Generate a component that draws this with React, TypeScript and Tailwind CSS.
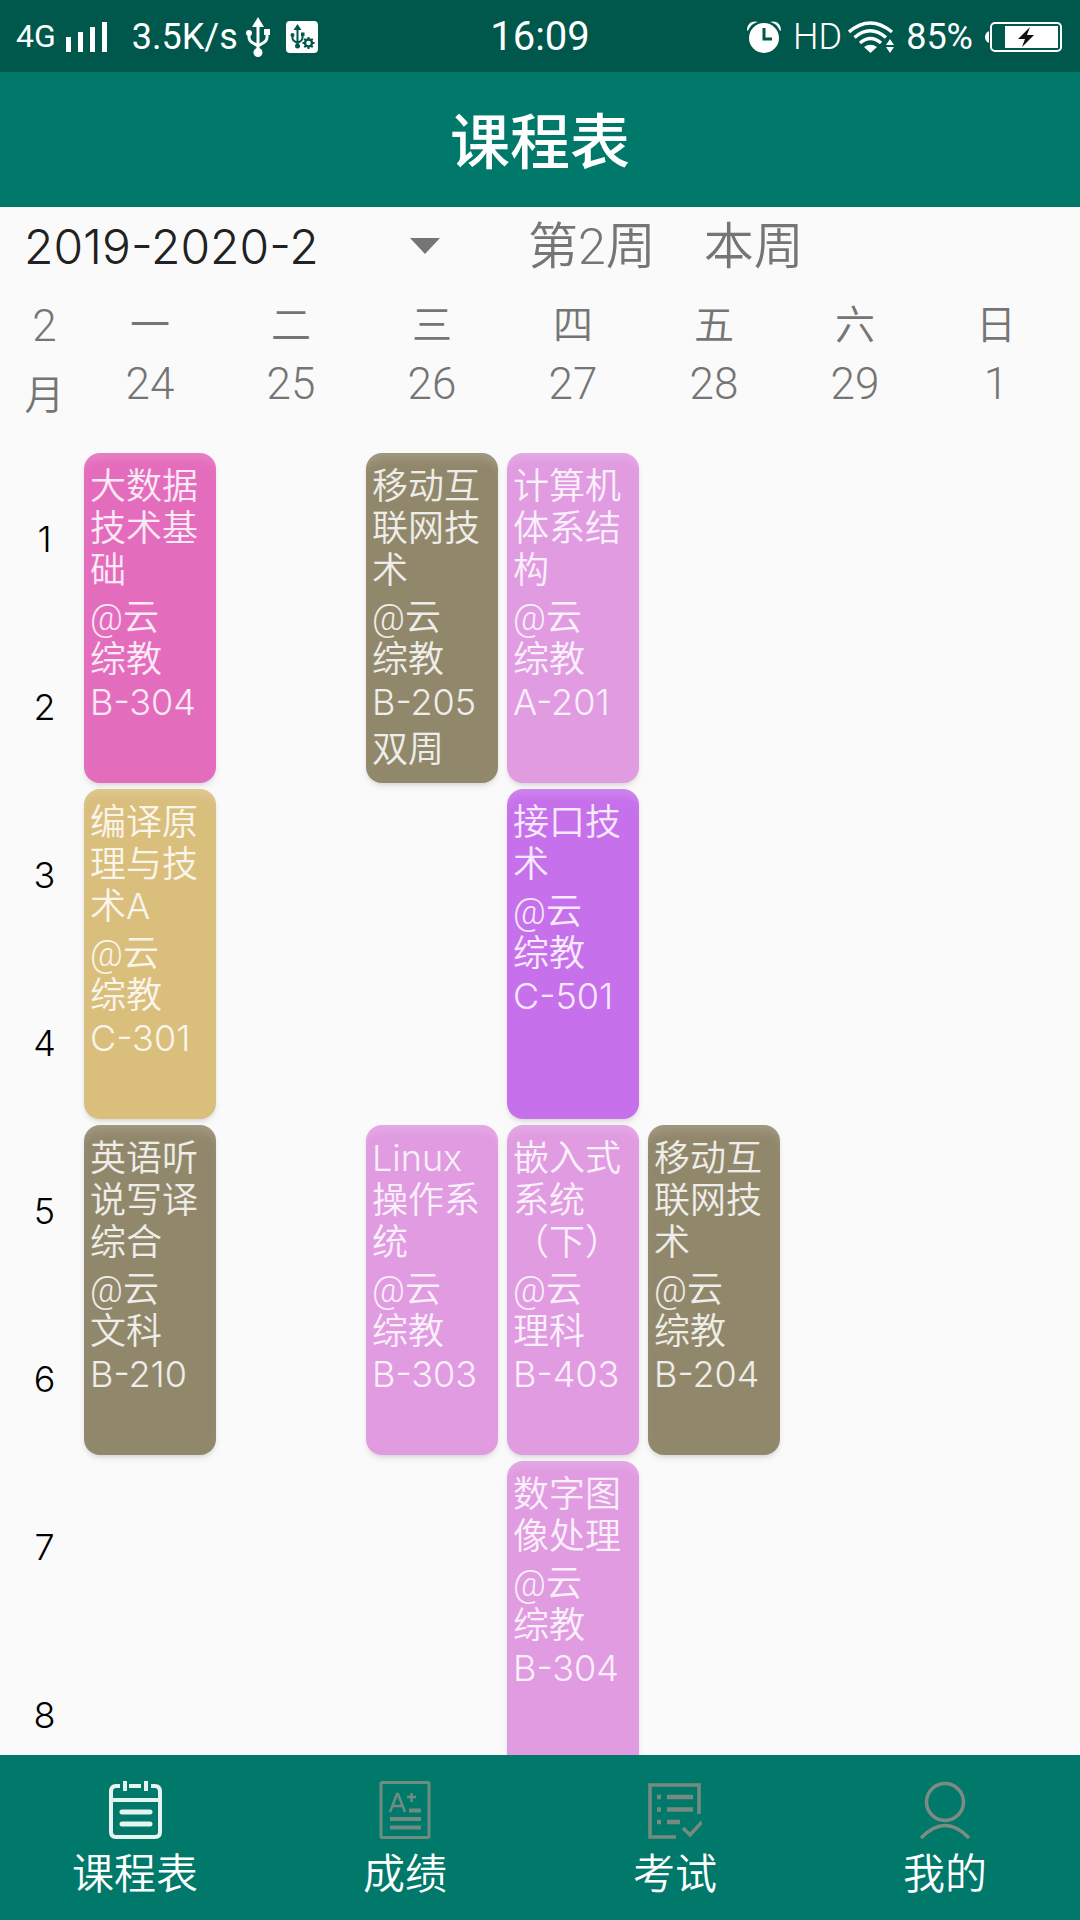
import { useState } from "react";

type Course = {
  day: number;
  start: number;
  title: string;
  campus: string;
  building: string;
  room: string;
  note?: string;
  tone: string;
};

const PINK = "bg-[#e46cbc]";
const OLIVE = "bg-[#91886c]";
const ORCHID = "bg-[#e09be1]";
const SAND = "bg-[#d9be7c]";
const VIOLET = "bg-[#c670eb]";

const courses: Course[] = [
  { day: 1, start: 1, title: "大数据技术基础", campus: "@云", building: "综教", room: "B-304", tone: PINK },
  { day: 3, start: 1, title: "移动互联网技术", campus: "@云", building: "综教", room: "B-205", note: "双周", tone: OLIVE },
  { day: 4, start: 1, title: "计算机体系结构", campus: "@云", building: "综教", room: "A-201", tone: ORCHID },
  { day: 1, start: 3, title: "编译原理与技术A", campus: "@云", building: "综教", room: "C-301", tone: SAND },
  { day: 4, start: 3, title: "接口技术", campus: "@云", building: "综教", room: "C-501", tone: VIOLET },
  { day: 1, start: 5, title: "英语听说写译综合", campus: "@云", building: "文科", room: "B-210", tone: OLIVE },
  { day: 3, start: 5, title: "Linux操作系统", campus: "@云", building: "综教", room: "B-303", tone: ORCHID },
  { day: 4, start: 5, title: "嵌入式系统（下）", campus: "@云", building: "理科", room: "B-403", tone: ORCHID },
  { day: 5, start: 5, title: "移动互联网技术", campus: "@云", building: "综教", room: "B-204", tone: OLIVE },
  { day: 4, start: 7, title: "数字图像处理", campus: "@云", building: "综教", room: "B-304", tone: ORCHID },
];

const days = [
  ["一", "24"],
  ["二", "25"],
  ["三", "26"],
  ["四", "27"],
  ["五", "28"],
  ["六", "29"],
  ["日", "1"],
];

const columnStart = ["", "col-start-2", "col-start-3", "col-start-4", "col-start-5", "col-start-6", "col-start-7", "col-start-8"];
const rowStart = ["", "row-start-1", "row-start-2", "row-start-3", "row-start-4", "row-start-5", "row-start-6", "row-start-7", "row-start-8"];

const gridColumns = "grid grid-cols-[61px_repeat(7,minmax(0,1fr))] gap-x-[9px] pl-[14px] pr-[18px]";

function SignalIcon() {
  return (
    <svg className="h-[30px] w-[42px]" viewBox="0 0 42 30" fill="currentColor" aria-hidden="true">
      <path d="M0 15h5v15H0zM12 10h5v20h-5zM24 5h5v25h-5zM36 0h5v30h-5z" />
    </svg>
  );
}

function UsbIcon() {
  return (
    <svg className="h-10 w-6" viewBox="0 0 24 40" aria-hidden="true">
      <path d="M12 0l6 10H6z" fill="#fff" />
      <path d="M12 8v28M3 16v4q0 4 4 6l5 3M21 15v5q0 4-4 6l-5 3" fill="none" stroke="#fff" strokeWidth="3" />
      <circle cx="12" cy="35.500" r="4.500" fill="#fff" />
      <circle cx="3" cy="16" r="3" fill="#fff" />
      <path d="M18 12h6v6h-6z" fill="#fff" />
    </svg>
  );
}

function UsbSettingsIcon() {
  return (
    <svg className="size-8" viewBox="0 0 32 32" aria-hidden="true">
      <rect width="32" height="32" rx="4" fill="#fff" />
      <g fill="none" stroke="#00574b">
        <path d="M11.500 6v19M6.500 14v3.500q0 2 5 4.500M16.500 13v4q0 2.500-5 5" strokeWidth="2" />
        <circle cx="22.500" cy="22" r="3.500" strokeWidth="2.400" />
        <path d="M22.500 16v2.500M22.500 25.500V28M16.500 22H19M26 22h2.500M18.300 17.800l1.700 1.700M25 24.500l1.700 1.700M18.300 26.200l1.700-1.700M25 19.500l1.700-1.700" strokeWidth="2" />
      </g>
      <path d="M11.500 3l4 6h-8zM15 11.500h3.500V15H15z" fill="#00574b" />
      <circle cx="6.500" cy="14" r="2" fill="#00574b" />
      <circle cx="11.500" cy="25" r="2.500" fill="#00574b" />
    </svg>
  );
}

function AlarmIcon() {
  return (
    <svg className="h-8 w-[34px]" viewBox="0 0 34 32" aria-hidden="true">
      <circle cx="17" cy="17" r="15" fill="#fff" />
      <path d="M17 7v11h8" fill="none" stroke="#00574b" strokeWidth="3" />
      <path d="M0 9C0 2 6-1 11 1 6 2 3 5 1 10zM34 9c0-7-6-10-11-8 5 1 8 4 10 9z" fill="#fff" />
    </svg>
  );
}

function WifiIcon() {
  return (
    <svg className="h-8 w-[46px]" viewBox="0 0 46 32" aria-hidden="true">
      <g fill="none" stroke="#fff" strokeWidth="3.400">
        <path d="M1 11Q22-7 44 11" />
        <path d="M6.500 16.500Q22 3 38 16.500" />
        <path d="M12 22q10.500-9 21 0" />
      </g>
      <path d="M16 26q6.500-4.500 13 0l-6.500 6z" fill="#fff" />
      <path d="M38 24l4-6 4 6zM38 26h8l-4 6z" fill="#fff" />
    </svg>
  );
}

function BatteryIcon() {
  return (
    <svg className="h-[30px] w-[77px]" viewBox="0 0 77 30" aria-hidden="true">
      <path d="M4 9v12Q0 19 0 15t4-6z" fill="#fff" />
      <rect x="6" y="1" width="70" height="28" rx="4" fill="none" stroke="#fff" strokeWidth="2" />
      <path d="M20 4h53v22H20z" fill="#fff" />
      <path d="M45 5L33 17h7l-3 8 12-12h-7z" fill="#111" />
    </svg>
  );
}

function ScheduleIcon() {
  return (
    <svg className="h-[58px] w-[54px]" viewBox="0 0 54 58" fill="none" stroke="#e6f4f1" strokeWidth="4" aria-hidden="true">
      <path d="M12 5H8q-5 0-5 6v40q0 5 5 5h39q5 0 5-5V11q0-6-5-6h-4M21 5h12M3 19h49" />
      <path d="M17 0v10M38 0v10" />
      <path d="M14 31h28M14 43h28" strokeWidth="5" strokeLinecap="round" />
    </svg>
  );
}

function GradesIcon() {
  return (
    <svg className="h-[58px] w-[54px]" viewBox="0 0 54 58" fill="none" stroke="#6f8c82" strokeWidth="3" aria-hidden="true">
      <rect x="3" y="1.500" width="48" height="55" rx="1" />
      <path d="M12 31l7-18h1l7 18M14 25h11M29 16h9M33.500 12v9" strokeWidth="2.500" />
      <path d="M31 29.500h12M12 38h31M12 46.500h31" strokeWidth="4" />
    </svg>
  );
}

function ExamIcon() {
  return (
    <svg className="h-[58px] w-[54px]" viewBox="0 0 54 58" fill="none" stroke="#778a80" strokeWidth="3.500" aria-hidden="true">
      <path d="M51 33V4H2v52h26" />
      <path d="M19 16h26M19 28.500h26M19 41h13M9 16h4M9 28.500h4M9 41h4" strokeWidth="4.500" />
      <path d="M35 47l7 7 12-13" />
    </svg>
  );
}

function ProfileIcon() {
  return (
    <svg className="h-[58px] w-[54px]" viewBox="0 0 54 58" fill="none" stroke="#808a84" strokeWidth="3.500" aria-hidden="true">
      <circle cx="27" cy="21" r="18.500" />
      <path d="M3 57q24-25 48 0" />
    </svg>
  );
}

const tabs = [
  { label: "课程表", Icon: ScheduleIcon },
  { label: "成绩", Icon: GradesIcon },
  { label: "考试", Icon: ExamIcon },
  { label: "我的", Icon: ProfileIcon },
];

export default function App() {
  const [tab, setTab] = useState("课程表");

  return (
    <div className="flex h-screen flex-col bg-[#fafafa] font-['Roboto','Noto_Sans_CJK_SC',sans-serif] font-[350]">
      <div className="grid h-[72px] shrink-0 grid-cols-[1fr_auto_1fr] items-center bg-[#00574b] pt-0.5 font-normal text-white">
        <div className="flex items-center pl-4 text-4xl">
          <span className="text-[32px]">4G</span>
          <span className="ml-2.5"><SignalIcon /></span>
          <span className="ml-6">3.5K/s</span>
          <span className="ml-2"><UsbIcon /></span>
          <span className="ml-4"><UsbSettingsIcon /></span>
        </div>
        <time className="text-[40px]">16:09</time>
        <div className="flex items-center justify-end pr-[18px] text-4xl">
          <AlarmIcon />
          <span className="ml-3 font-light">HD</span>
          <span className="ml-1.5"><WifiIcon /></span>
          <span className="ml-3">85%</span>
          <span className="ml-3"><BatteryIcon /></span>
        </div>
      </div>

      <header className="flex h-[135px] shrink-0 items-center justify-center bg-[#00796b] pt-2">
        <h1 className="text-6xl font-medium text-white">课程表</h1>
      </header>

      <div className="flex h-20 shrink-0 items-center text-[50px] leading-none">
        <div className="relative w-[504px]">
          <select
            aria-label="学期"
            className="w-full appearance-none bg-transparent pl-6 font-['Inter',sans-serif] text-5xl leading-none font-light text-[#212121] outline-none"
          >
            <option>2019-2020-2</option>
          </select>
          <svg className="pointer-events-none absolute right-16 top-4 h-4 w-[30px]" viewBox="0 0 30 16" fill="#757575" aria-hidden="true">
            <path d="M0 0h30L15 16z" />
          </svg>
        </div>
        <span className="ml-6 text-[#757575]">第2周</span>
        <button type="button" className="ml-12 text-[#757575]">本周</button>
      </div>

      <div className={`${gridColumns} h-[163px] shrink-0 pt-1 text-center text-[44px] text-[#757575]`}>
        <div className="leading-[70px]">
          <div>2</div>
          <div className="text-[40px]">月</div>
        </div>
        {days.map(([name, date]) => (
          <div key={name} className="pt-1.5 leading-[58px]">
            <div className="text-[40px]">{name}</div>
            <div>{date}</div>
          </div>
        ))}
      </div>

      <main className="min-h-0 flex-1 overflow-hidden">
        <div className={`${gridColumns} grid-rows-[repeat(8,162px)] gap-y-1.5 pt-[3px]`}>
          {[1, 2, 3, 4, 5, 6, 7, 8].map((n) => (
            <div key={n} className={`col-start-1 ${rowStart[n]} flex items-center justify-center pt-2.5 font-['Inter',sans-serif] text-4xl text-black`}>
              {n}
            </div>
          ))}
          {courses.map((c) => (
            <button
              type="button"
              key={`${c.day}-${c.start}`}
              className={`${columnStart[c.day]} ${rowStart[c.start]} row-span-2 flex flex-col justify-start gap-1.5 rounded-2xl px-1.5 pt-3 text-left text-4xl leading-[42px] text-white/85 shadow-md inset-shadow-[0_10px_8px_-4px] inset-shadow-white/15 ${c.tone}`}
            >
              <span className="font-['Inter','Noto_Sans_CJK_SC',sans-serif] break-words">{c.title}</span>
              <span className="flex flex-col">
                <span>{c.campus}</span>
                <span>{c.building}</span>
                <span className="font-['Inter',sans-serif]">{c.room}</span>
              </span>
              {c.note && <span>{c.note}</span>}
            </button>
          ))}
        </div>
      </main>

      <nav className="grid h-[165px] shrink-0 grid-cols-4 bg-[#00796b]">
        {tabs.map(({ label, Icon }) => (
          <button
            type="button"
            key={label}
            aria-pressed={tab === label}
            onClick={() => setTab(label)}
            className="flex flex-col items-center gap-2 pt-[26px] text-[42px] leading-[56px] text-white"
          >
            <Icon />
            <span>{label}</span>
          </button>
        ))}
      </nav>
    </div>
  );
}
